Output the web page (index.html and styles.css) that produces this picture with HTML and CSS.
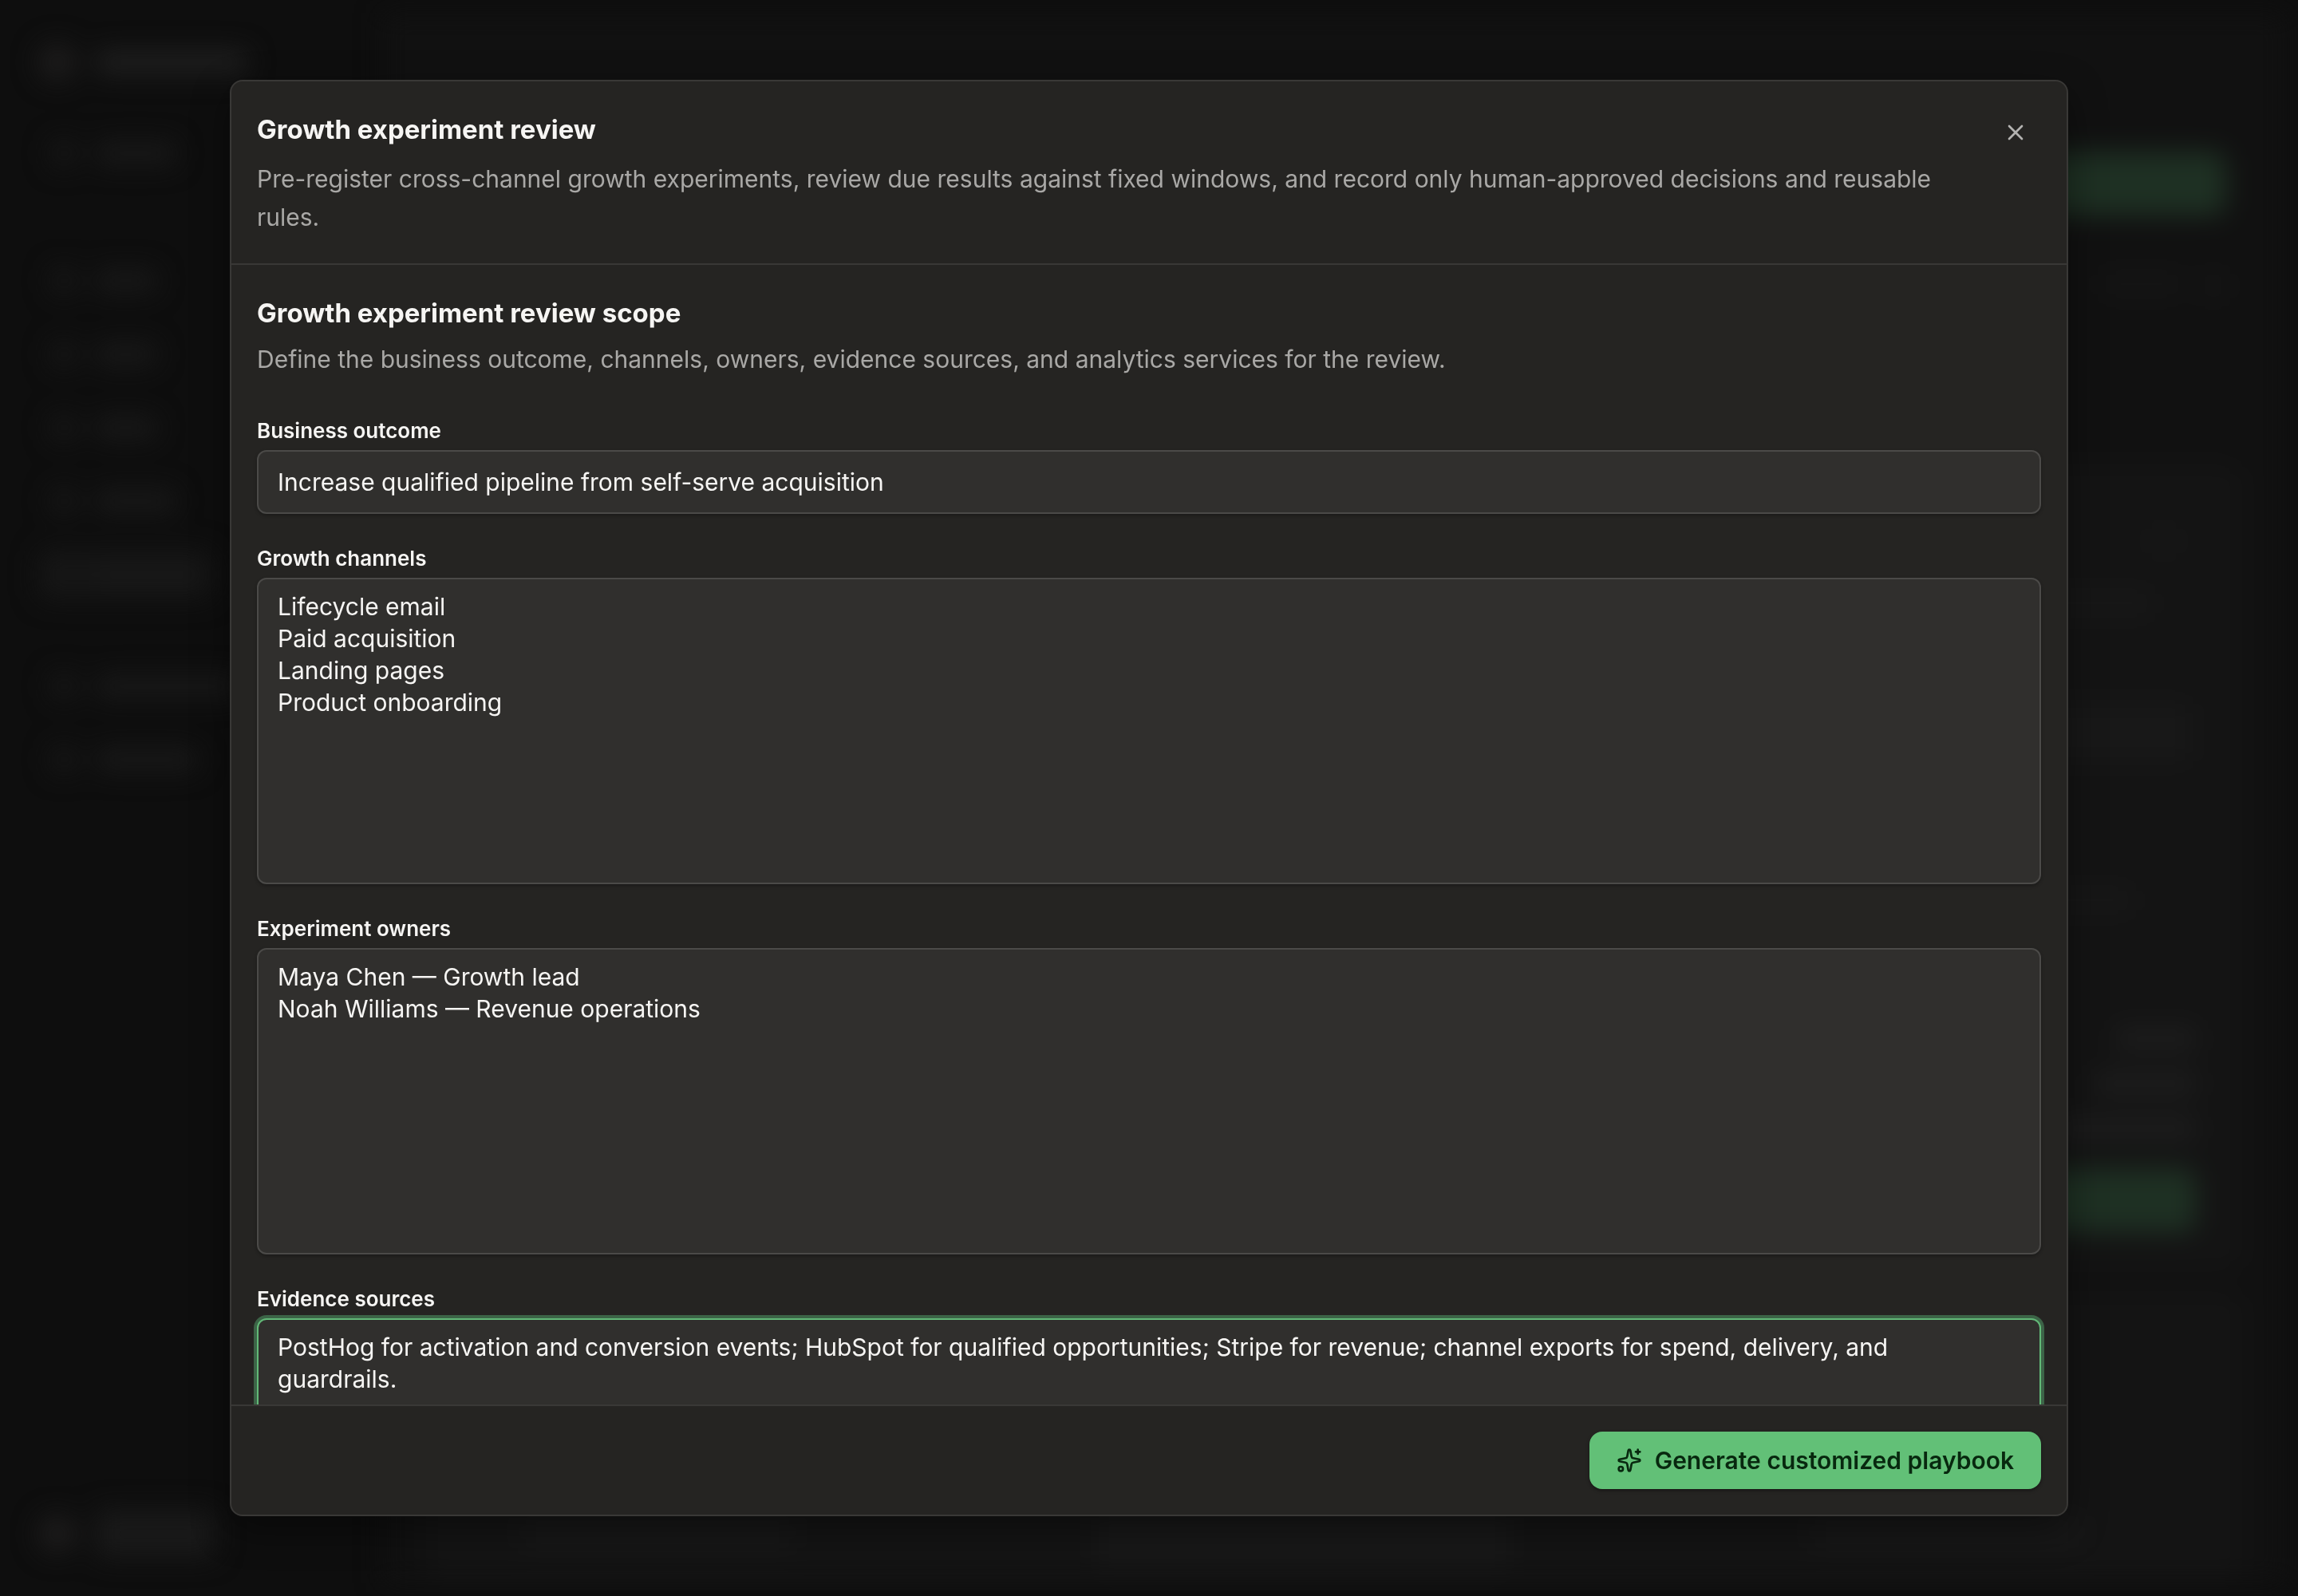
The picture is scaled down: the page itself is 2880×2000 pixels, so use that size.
FILE: index.html
```html
<!DOCTYPE html>
<html lang="en">
<head>
    <meta charset="UTF-8">
    <meta name="viewport" content="width=device-width, initial-scale=1.0">
    <title>Growth experiment review</title>
    <link rel="stylesheet" href="styles.css">
</head>
<body>
    <!-- App shell, blurred out behind the dialog -->
    <div class="app" aria-hidden="true">
        <div class="sidebar">
            <div class="brand"><i class="dot"></i><i class="bar bar-brand"></i></div>
            <div class="nav-group">
                <div class="nav-item"><i class="icon"></i><i class="bar bar-m"></i></div>
            </div>
            <div class="nav-group">
                <div class="nav-item"><i class="icon"></i><i class="bar bar-s"></i></div>
                <div class="nav-item"><i class="icon"></i><i class="bar bar-s"></i></div>
                <div class="nav-item"><i class="icon"></i><i class="bar bar-s"></i></div>
                <div class="nav-item"><i class="icon"></i><i class="bar bar-m"></i></div>
                <div class="nav-item active"><i class="icon"></i><i class="bar bar-l"></i></div>
            </div>
            <div class="nav-group">
                <div class="nav-item"><i class="icon"></i><i class="bar bar-xl"></i></div>
                <div class="nav-item"><i class="icon"></i><i class="bar bar-l"></i></div>
            </div>
            <div class="account"><i class="dot"></i><i class="bar bar-account"></i></div>
        </div>
        <div class="main">
            <div class="main-top"><i class="cta"></i></div>
            <div class="main-filter"><i class="bar bar-m faint"></i><i class="icon faint"></i></div>
            <div class="card card-tall">
                <i class="icon"></i>
                <i class="bar bar-text"></i>
                <i class="bar bar-text wide"></i>
                <i class="bar bar-text"></i>
                <div class="stats">
                    <i class="bar bar-m"></i>
                    <i class="bar bar-l"></i>
                    <i class="bar bar-xl"></i>
                </div>
                <i class="cta"></i>
            </div>
            <div class="card card-row">
                <i class="bar bar-low"></i>
                <i class="bar bar-low tall"></i>
                <i class="bar bar-low"></i>
            </div>
        </div>
    </div>

    <div class="overlay">
        <div class="dialog" role="dialog" aria-modal="true" aria-labelledby="dialog-title">
            <header class="dialog-header">
                <div class="dialog-heading">
                    <h1 id="dialog-title">Growth experiment review</h1>
                    <p>Pre-register cross-channel growth experiments, review due results against fixed windows, and record only human-approved decisions and reusable rules.</p>
                </div>
                <button type="button" class="close-button" aria-label="Close">
                    <svg viewBox="0 0 24 24" width="32" height="32"><path d="M18 6 6 18M6 6l12 12"/></svg>
                </button>
            </header>

            <form class="dialog-body" id="scope-form">
                <div class="section-heading">
                    <h2>Growth experiment review scope</h2>
                    <p>Define the business outcome, channels, owners, evidence sources, and analytics services for the review.</p>
                </div>
                <div class="field">
                    <label for="outcome">Business outcome</label>
                    <input type="text" id="outcome" value="Increase qualified pipeline from self-serve acquisition">
                </div>
                <div class="field">
                    <label for="channels">Growth channels</label>
                    <textarea id="channels">Lifecycle email
Paid acquisition
Landing pages
Product onboarding</textarea>
                </div>
                <div class="field">
                    <label for="owners">Experiment owners</label>
                    <textarea id="owners">Maya Chen — Growth lead
Noah Williams — Revenue operations</textarea>
                </div>
                <div class="field">
                    <label for="evidence">Evidence sources</label>
                    <textarea id="evidence" class="focused">PostHog for activation and conversion events; HubSpot for qualified opportunities; Stripe for revenue; channel exports for spend, delivery, and guardrails.</textarea>
                </div>
            </form>

            <footer class="dialog-footer">
                <button type="submit" form="scope-form" class="generate-button">
                    <svg viewBox="0 0 24 24" width="32" height="32">
                        <path d="M11.017 2.814a1 1 0 0 1 1.966 0l1.051 5.558a2 2 0 0 0 1.594 1.594l5.558 1.051a1 1 0 0 1 0 1.966l-5.558 1.051a2 2 0 0 0-1.594 1.594l-1.051 5.558a1 1 0 0 1-1.966 0l-1.051-5.558a2 2 0 0 0-1.594-1.594l-5.558-1.051a1 1 0 0 1 0-1.966l5.558-1.051a2 2 0 0 0 1.594-1.594z"/>
                        <path d="M20 2v4M22 4h-4"/>
                        <circle cx="4" cy="20" r="2"/>
                    </svg>
                    Generate customized playbook
                </button>
            </footer>
        </div>
    </div>
</body>
</html>
```
FILE: styles.css
```css
* {
    box-sizing: border-box;
}
body {
    margin: 0;
    height: 100vh;
    overflow: hidden;
    background-color: #0e0e0e;
    color: #f6f5f3;
    font-family: Inter, "Liberation Sans", sans-serif;
    font-size: 30px;
}
h1, h2, p {
    margin: 0;
}

/* App shell behind the dialog */
.app {
    display: flex;
    height: 100vh;
    filter: blur(16px);
}
.app i {
    display: block;
    flex: none;
}
.sidebar {
    display: flex;
    flex-direction: column;
    width: 480px;
    padding: 48px;
}
.brand, .account, .nav-item {
    display: flex;
    align-items: center;
    gap: 24px;
}
.brand {
    height: 60px;
    margin-bottom: 52px;
}
.nav-group {
    display: flex;
    flex-direction: column;
    gap: 28px;
    margin-bottom: 96px;
}
.nav-item {
    height: 64px;
    padding: 0 16px;
    border-radius: 12px;
}
.nav-group + .nav-group {
    margin-bottom: 76px;
}
.active {
    width: 220px;
    background-color: #151515;
}
.account {
    margin-top: auto;
}
.dot {
    width: 48px;
    height: 48px;
    border-radius: 50%;
    background-color: #1d1c1c;
}
.icon {
    width: 32px;
    height: 32px;
    border-radius: 8px;
    background-color: #171717;
}
.bar {
    height: 28px;
    border-radius: 8px;
    background-color: #191919;
}
.bar-brand {
    width: 190px;
    background-color: #202020;
}
.bar-account {
    width: 150px;
    height: 60px;
}
.bar-s { width: 76px; }
.bar-m { width: 100px; }
.bar-l { width: 128px; }
.bar-xl { width: 180px; }
.faint {
    background-color: #151515;
}
.main {
    display: flex;
    flex: 1;
    flex-direction: column;
    margin: 16px 16px 16px 0;
    padding: 174px 54px 0;
    background-color: #111111;
}
.main-top, .main-filter {
    display: flex;
    justify-content: flex-end;
    gap: 24px;
    padding-right: 20px;
}
.cta {
    width: 360px;
    height: 80px;
    border-radius: 16px;
    background-color: #1e3023;
}
.main-filter {
    margin: 72px 0 208px;
}
.card {
    border-radius: 24px;
    background-color: #141414;
}
.card-tall {
    display: flex;
    flex-direction: column;
    align-items: flex-end;
    height: 1010px;
    margin-bottom: 28px;
    padding: 80px 58px 48px;
}
.card-tall .icon {
    margin-right: 24px;
}
.stats .bar {
    background-color: #1d1d1d;
}
.bar-text {
    width: 160px;
    margin: 48px 56px 0 0;
    background-color: #181818;
}
.wide {
    width: 260px;
    height: 72px;
    margin: 112px 8px 160px 0;
}
.card-tall .bar-text + .bar-text:not(.wide) {
    margin: 0 80px 0 0;
}
.stats {
    display: flex;
    flex-direction: column;
    align-items: flex-end;
    gap: 28px;
    margin: auto 0 36px;
}
.card-row {
    display: flex;
    flex: 1;
    align-items: flex-end;
    justify-content: space-between;
    padding: 0 200px 20px 120px;
}
.bar-low {
    width: 340px;
    height: 40px;
    margin-bottom: 24px;
    background-color: #181818;
}
.tall {
    width: 520px;
    height: 72px;
    margin-bottom: 0;
}

/* Dialog */
.overlay {
    position: fixed;
    inset: 0;
    display: flex;
    align-items: center;
    justify-content: center;
}
.dialog {
    display: flex;
    flex-direction: column;
    width: 80%;
    height: 90%;
    overflow: hidden;
    background-color: #252422;
    border: 2px solid #393836;
    border-radius: 16px;
    box-shadow: 0 16px 48px rgba(0, 0, 0, 0.4);
}
.dialog-header {
    display: flex;
    align-items: flex-start;
    gap: 16px;
    padding: 32px 32px 34px;
    border-bottom: 2px solid #393836;
}
.dialog-heading {
    flex: 1;
}
h1, h2 {
    font-size: 33px;
    line-height: 56px;
    font-weight: 700;
}
p {
    color: #a9a8a6;
    line-height: 48px;
}
h1 + p {
    margin-top: 10px;
}
h2 + p {
    margin-top: 6px;
}
button {
    font: inherit;
    border: 0;
    cursor: pointer;
}
svg {
    fill: none;
    stroke: currentColor;
    stroke-width: 2;
    stroke-linecap: round;
    stroke-linejoin: round;
}
.close-button {
    display: flex;
    align-items: center;
    justify-content: center;
    width: 64px;
    height: 64px;
    padding: 0;
    background: none;
    color: #b4b3b1;
}
.dialog-body {
    display: flex;
    flex: 1;
    flex-direction: column;
    gap: 40px;
    min-height: 0;
    padding: 32px;
    overflow-y: auto;
    scrollbar-width: none;
}
.section-heading {
    margin-bottom: 10px;
}
.field {
    display: flex;
    flex-direction: column;
    gap: 8px;
}
label {
    font-size: 26px;
    line-height: 32px;
    font-weight: 600;
}
input, textarea {
    width: 100%;
    padding: 14px 40px 14px 24px;
    background-color: #302f2d;
    border: 2px solid #4b4a48;
    border-radius: 12px;
    box-shadow: 0 2px 4px rgba(0, 0, 0, 0.3);
    color: inherit;
    font: inherit;
    line-height: 40px;
    outline: none;
}
input {
    height: 80px;
}
textarea {
    display: block;
    height: 384px;
    resize: none;
}
.focused, input:focus, textarea:focus {
    border-color: #62b877;
    box-shadow: 0 0 0 4px #3c6447;
}
.dialog-footer {
    display: flex;
    justify-content: flex-end;
    padding: 32px;
    border-top: 2px solid #393836;
}
.generate-button {
    display: flex;
    align-items: center;
    gap: 16px;
    height: 72px;
    padding: 0 34px;
    background-color: #62c077;
    border-radius: 16px;
    box-shadow: 0 2px 4px rgba(0, 0, 0, 0.4);
    color: #08280f;
    font-weight: 600;
}
```
